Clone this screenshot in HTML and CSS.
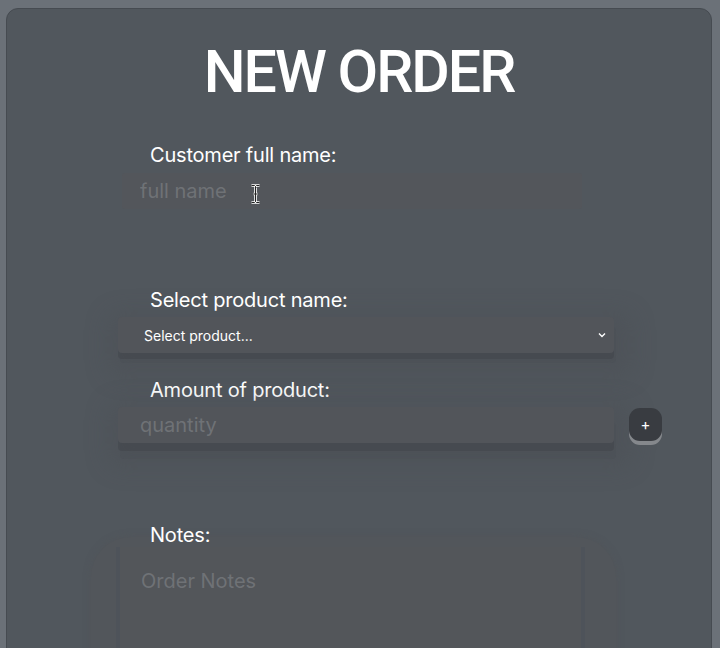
FILE: index.html
```html
<!DOCTYPE html>
<html>
<head>
<meta charset="utf-8">
<link rel="stylesheet" href="styles.css">
</head>
<body>
<div class="card">
  <h1 class="title">NEW ORDER</h1>
  <form class="form">
    <div class="field field-name">
      <label class="label">Customer full name:</label>
      <div class="input-wrap">
        <input class="input input-name" type="text" placeholder="full name">
        <svg class="cursor" width="11" height="20" viewBox="0 0 11 20"><path d="M1.5 1.5h3l1 1 1-1h3M5.5 2.5v15M1.5 18.5h3l1-1 1 1h3M3.5 10h4" fill="none" stroke="#fff" stroke-width="2.6"/><path d="M1.5 1.5h3l1 1 1-1h3M5.5 2.5v15M1.5 18.5h3l1-1 1 1h3M3.5 10h4" fill="none" stroke="#222" stroke-width="1"/></svg>
      </div>
    </div>
    <div class="field field-product">
      <label class="label">Select product name:</label>
      <div class="select">
        <span>Select product...</span>
        <svg class="chev" width="8" height="6" viewBox="0 0 8 6"><path d="M1 1.5l3 3 3-3" fill="none" stroke="#fff" stroke-width="1.4"/></svg>
      </div>
    </div>
    <div class="field field-amount">
      <label class="label">Amount of product:</label>
      <div class="row">
        <input class="input input-qty" type="text" placeholder="quantity">
        <button class="plus" type="button">+</button>
      </div>
    </div>
    <div class="field field-notes">
      <label class="label">Notes:</label>
      <div class="notes-wrap">
        <textarea class="notes" placeholder="Order Notes"></textarea>
      </div>
    </div>
  </form>
</div>
</body>
</html>
```
FILE: styles.css
```css
html, body {
  margin: 0;
  padding: 0;
  background: #6b7178;
  height: 648px;
  overflow: hidden;
}
body {
  padding: 8px 8px 0 6px;
  box-sizing: border-box;
  font-family: Inter, "Noto Sans", sans-serif;
}
.card {
  background: #51575d;
  border: 1px solid #464b51;
  border-radius: 12px;
  height: 700px;
  box-sizing: border-box;
}
.title {
  margin: 25px 0 0 0;
  text-align: center;
  font-family: Roboto, sans-serif;
  font-weight: 500;
  font-size: 59px;
  line-height: 76px;
  color: #fff;
  letter-spacing: -2px;
}
.form {
  margin-left: 111px;
  width: 496px;
  display: flex;
  flex-direction: column;
}
.label {
  display: block;
  padding-left: 32px;
  font-size: 20px;
  line-height: 24px;
  color: #fff;
  letter-spacing: -0.2px;
}
.field-name { margin-top: 33px; }
.input-wrap {
  position: relative;
  margin-top: 6px;
  margin-left: 4px;
  width: 460px;
}
.input {
  display: block;
  box-sizing: border-box;
  border: none;
  outline: none;
  background: #53565b;
  font-family: Inter, "Noto Sans", sans-serif;
  font-size: 20px;
  color: #fff;
  padding: 0 18px;
}
.input::placeholder { color: #6f7276; }
.input-name {
  width: 460px;
  height: 36px;
  border-radius: 3px;
}
.cursor {
  position: absolute;
  left: 128px;
  top: 11px;
}
.field-product { margin-top: 79px; }
.select {
  margin-top: 5px;
  height: 36px;
  background: #52555a;
  border-radius: 4px;
  display: flex;
  align-items: center;
  justify-content: space-between;
  padding: 0 8px 0 26px;
  color: #fff;
  font-size: 14px;
  box-shadow: 0 6px 0 rgba(60, 64, 70, 0.35), 2px 10px 0 rgba(72, 76, 82, 0.25), 4px 10px 22px 14px rgba(74, 77, 82, 0.35);
}
.field-amount { margin-top: 25px; }
.row {
  margin-top: 5px;
  display: flex;
  align-items: flex-start;
}
.input-qty {
  flex-shrink: 0;
  width: 496px;
  height: 36px;
  border-radius: 4px;
  padding: 0 22px;
  background: #52555a;
  box-shadow: 0 8px 0 rgba(60, 64, 70, 0.35), 2px 16px 0 rgba(72, 76, 82, 0.25), 4px 10px 22px 14px rgba(74, 77, 82, 0.35);
}
.plus {
  flex-shrink: 0;
  margin-left: 15px;
  margin-top: 1px;
  width: 33px;
  height: 33px;
  border: none;
  border-radius: 11px;
  background: #393c41;
  color: #fff;
  font-size: 15px;
  font-family: Inter, sans-serif;
  padding: 0;
  box-shadow: 0 4px 0 #85888c;
}
.field-notes { margin-top: 80px; }
.notes-wrap {
  margin-top: -10px;
  margin-left: -27px;
  width: 525px;
  box-sizing: border-box;
  padding: 10px 0 0 25px;
  border-radius: 40px 40px 0 0;
  background: #52565b;
  box-shadow: 0 0 6px 1px rgba(82, 84, 88, 0.5);
}
.notes {
  display: block;
  width: 469px;
  height: 200px;
  box-sizing: border-box;
  border: none;
  border-left: 4px solid #4e535a;
  border-right: 4px solid #4e535a;
  outline: none;
  resize: none;
  background: #53565a;
  font-family: Inter, "Noto Sans", sans-serif;
  font-size: 20px;
  padding: 22px 21px;
  color: #fff;
}
.notes::placeholder { color: #6f7276; }
```
